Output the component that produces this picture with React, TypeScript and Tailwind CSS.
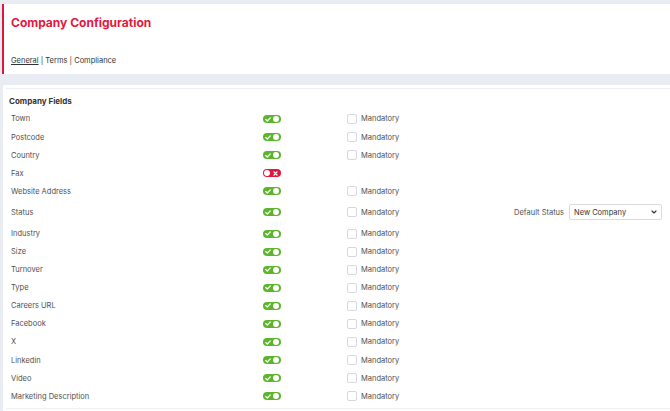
import { ChevronDown } from 'lucide-react'

interface Field {
  label: string
  enabled: boolean
  mandatory: boolean
  status?: boolean
}

const fields: Field[] = [
  { label: 'Town', enabled: true, mandatory: true },
  { label: 'Postcode', enabled: true, mandatory: true },
  { label: 'Country', enabled: true, mandatory: true },
  { label: 'Fax', enabled: false, mandatory: false },
  { label: 'Website Address', enabled: true, mandatory: true },
  { label: 'Status', enabled: true, mandatory: true, status: true },
  { label: 'Industry', enabled: true, mandatory: true },
  { label: 'Size', enabled: true, mandatory: true },
  { label: 'Turnover', enabled: true, mandatory: true },
  { label: 'Type', enabled: true, mandatory: true },
  { label: 'Careers URL', enabled: true, mandatory: true },
  { label: 'Facebook', enabled: true, mandatory: true },
  { label: 'X', enabled: true, mandatory: true },
  { label: 'Linkedin', enabled: true, mandatory: true },
  { label: 'Video', enabled: true, mandatory: true },
  { label: 'Marketing Description', enabled: true, mandatory: true },
]

function Toggle({ on }: { on: boolean }) {
  if (on) {
    return (
      <div className="w-[18px] h-[8px] rounded-full bg-[#5db52b] flex items-center justify-between px-[2px]">
        <svg width="6" height="5" viewBox="0 0 6 5">
          <path d="M0.7 2.6 L2.3 4 L5.3 0.9" stroke="white" strokeWidth="1.3" fill="none" strokeLinecap="round" strokeLinejoin="round" />
        </svg>
        <div className="size-[6px] rounded-full bg-white" />
      </div>
    )
  }

  return (
    <div className="w-[18px] h-[8px] rounded-full bg-[#e3173e] flex items-center justify-between px-[1px] pr-[3px]">
      <div className="size-[6px] rounded-full bg-white" />
      <svg width="5" height="5" viewBox="0 0 5 5">
        <path d="M1 1 L4 4 M4 1 L1 4" stroke="white" strokeWidth="1.2" strokeLinecap="round" />
      </svg>
    </div>
  )
}

export default function App() {
  return (
    <div className="min-h-[411px] bg-[#e9ecf2] pt-[4px] text-[#505050] font-['Inter',sans-serif]">
      <div className="ml-[2px] bg-white border-l-2 border-[#e3173e] h-[70px] pl-[7px] pt-[13px]">
        <h1 className="text-[12px] font-bold text-[#e3173e] leading-none">Company Configuration</h1>
        <div className="mt-[26px] text-[7.5px] text-[#333]">
          <span className="underline">General</span> | Terms | Compliance
        </div>
      </div>

      <div className="mt-[11px] ml-[3px] bg-white pt-[3px] pb-[2px]">
        <div className="ml-[3px] border-t border-b border-[#eef0f4] pb-[3px]">
          <h2 className="text-[8px] font-bold text-[#333] pl-[3px] pt-[6px] pb-[3px]">Company Fields</h2>

          <div className="flex flex-col">
            {fields.map((field) => (
              <div
                key={field.label}
                className={`flex items-center text-[7.5px] ${field.status ? 'h-[24px]' : 'h-[18.1px]'}`}
              >
                <div className="w-[257px] pl-[5px]">{field.label}</div>
                <div className="w-[84px]">
                  <Toggle on={field.enabled} />
                </div>
                {field.enabled && (
                  <div className="flex items-center gap-[4px]">
                    <div className="size-[10px] rounded-[2px] border border-[#d4d8e2] bg-white" />
                    <span>Mandatory</span>
                  </div>
                )}
                {field.status && (
                  <div className="ml-auto mr-[8px] flex items-center gap-[5px]">
                    <span>Default Status</span>
                    <div className="w-[93px] h-[16px] border border-[#d8dbe3] rounded-[2px] flex items-center justify-between pl-[4px] pr-[3px] text-[#333]">
                      <span>New Company</span>
                      <ChevronDown className="size-[8px]" strokeWidth={3.5} />
                    </div>
                  </div>
                )}
              </div>
            ))}
          </div>
        </div>
      </div>
    </div>
  )
}
